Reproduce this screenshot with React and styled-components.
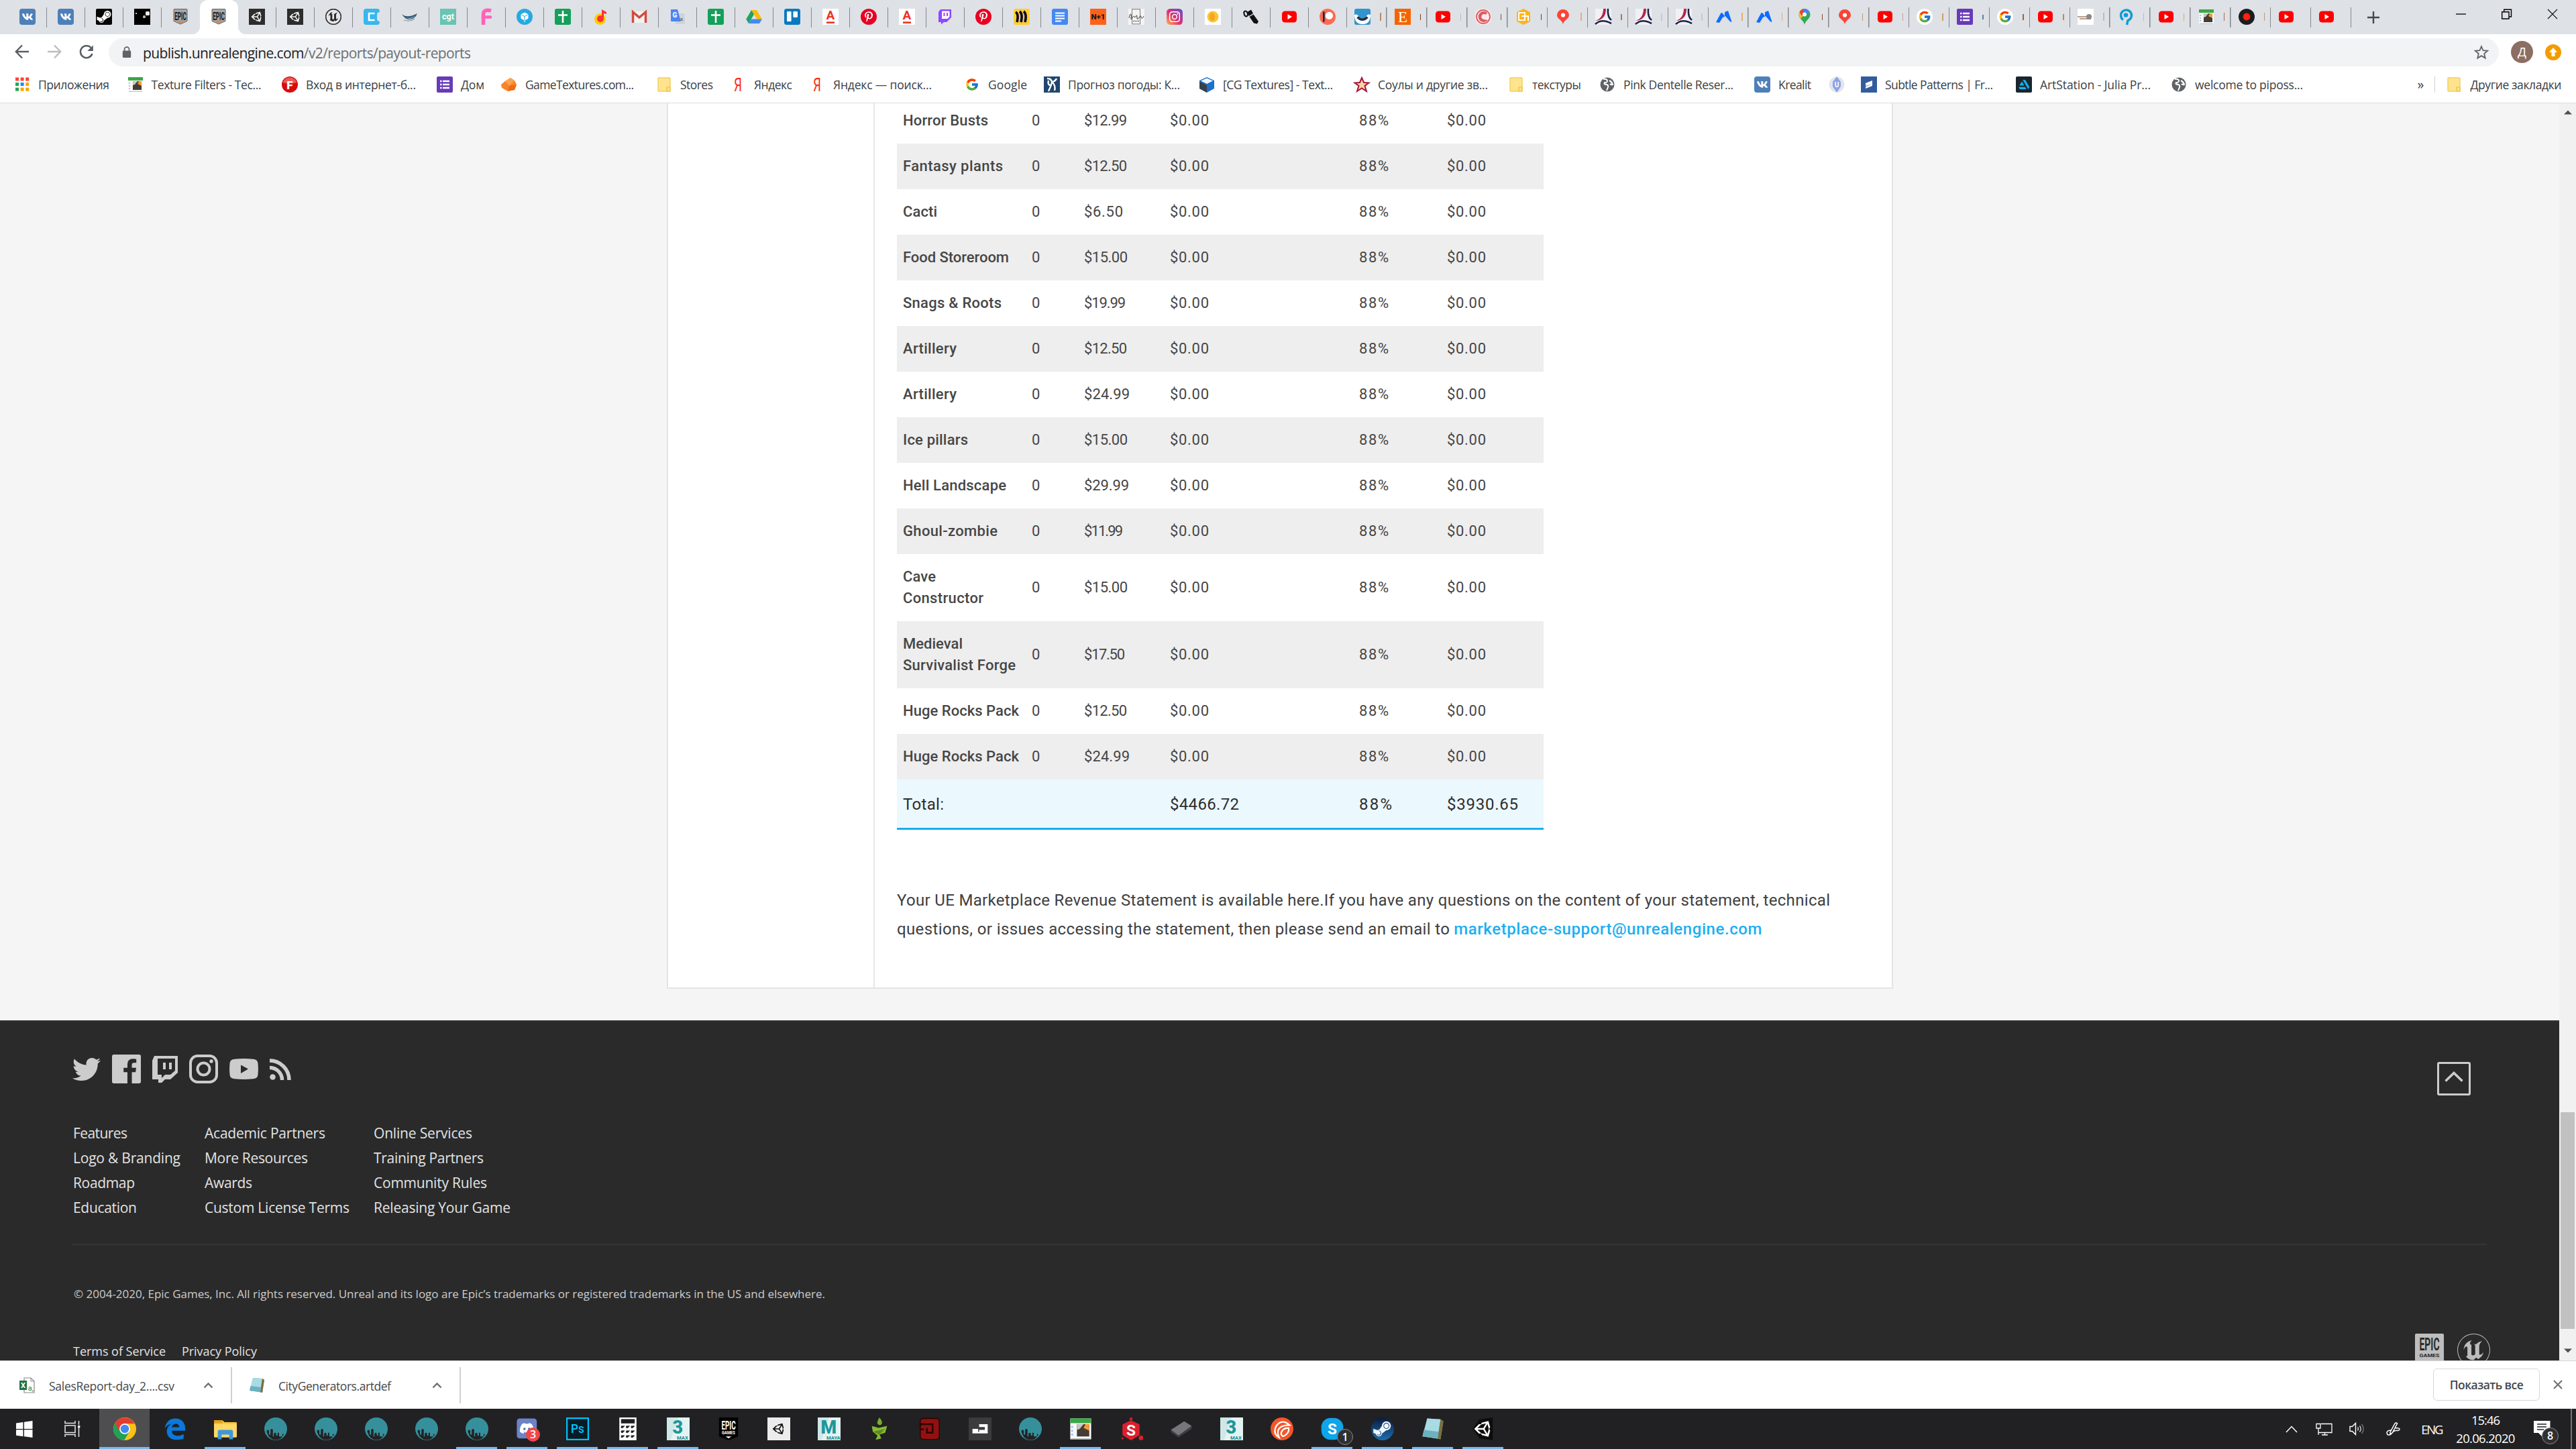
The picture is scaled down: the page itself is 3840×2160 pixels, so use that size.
import React, { useLayoutEffect, useRef, useState } from "react";
import styled, { createGlobalStyle, css } from "styled-components";
import {
  FaVk, FaSteamSymbol, FaPinterestP, FaInstagram, FaTwitter, FaDiscord, FaRss, FaUnity,
} from "react-icons/fa";
import { FcGoogle } from "react-icons/fc";
import { SiUnrealengine, SiArtstation } from "react-icons/si";

const UI = `"Open Sans", "Noto Sans", sans-serif`;
const BODY = `Roboto, "Liberation Sans", sans-serif`;

const Global = createGlobalStyle`
  * { box-sizing: border-box; }
  html, body { margin: 0; padding: 0; overflow: hidden; background: #fff; }
  svg { display: block; flex: none; overflow: visible; }
`;

const Line = styled.span`
  display: inline-block;
  white-space: pre;
`;

function Fit({ w, children, as }) {
  const ref = useRef(null);
  const [gap, setGap] = useState(0);
  useLayoutEffect(() => {
    const el = ref.current;
    const range = document.createRange();
    range.selectNodeContents(el);
    el.style.letterSpacing = "0px";
    const natural = range.getBoundingClientRect().width;
    const n = el.textContent.length;
    if (n > 1) {
      const g = (w - natural) / (n - 1);
      setGap(g);
      el.style.letterSpacing = g + "px";
    }
  }, [w]);
  return <Line as={as} ref={ref} style={{ letterSpacing: gap }}>{children}</Line>;
}

/* ---------- icon artwork, all on a 24 unit grid ---------- */

const T = ({ x = 12, y = 17, s = 14, f = "#fff", b = 700, c, ff = "Roboto", sp }) => (
  <text x={x} y={y} fontSize={s} fill={f} fontWeight={b} textAnchor="middle" fontFamily={`${ff}, sans-serif`} textLength={sp} lengthAdjust="spacingAndGlyphs">{c}</text>
);

const maxTile = (letter, sub) => (
  <>
    <rect width="24" height="24" fill="#e4f3f2" />
    <path d="M0 0H12L4 24H0Z" fill="#cfe8e7" />
    <T x={11.5} y={17} s={19} f="#1c979c" b={900} c={letter} />
    <T x={16.5} y={23} s={5.4} f="#148d92" c={sub} />
  </>
);

const art = {
  vk: <><rect width="24" height="24" rx="4" fill="#4f7fb8" /><FaVk x="3.5" y="3.5" size="17" color="#fff" /></>,
  steam: <><rect width="24" height="24" rx="2" fill="#050506" /><FaSteamSymbol x="0" y="0" size="24" color="#fff" /></>,
  black: <><rect width="24" height="24" fill="#000" /><rect x="2" y="6" width="2" height="2" fill="#ccc" /><rect x="17" y="4" width="6" height="6" rx="1.5" fill="#eee" /><rect x="13" y="10" width="4" height="4" rx="1.5" fill="#bbb" /></>,
  epic: <><path d="M2 1.5Q2 .5 3 .5H21Q22 .5 22 1.5V18.5L12 23 2 18.5Z" fill="#a5a5a5" stroke="#666" /><T y={16.5} s={16} f="#1b1b1b" c="EPIC" sp={17.5} /><path d="M6.5 18.5H17.5L12 21.8Z" fill="#f37c2c" /></>,
  unity: <><rect width="24" height="24" fill="#2d2d2d" /><FaUnity x="3" y="3" size="18" color="#f4f4f4" /></>,
  ue: <><circle cx="12" cy="12" r="11.2" fill="#e6e7ea" stroke="#333" strokeWidth="1.4" /><SiUnrealengine x="0" y="0" size="24" color="#2b2b2b" /></>,
  cyan: <><rect width="24" height="24" rx="4" fill="#36b7ee" /><path d="M24.5 4 20 7V17L24.5 20Z" fill="#dee1e6" /><path d="M16.500 7H8V17H16.500" fill="none" stroke="#fff" strokeWidth="2.600" /></>,
  bird: <><path d="M0 8Q8 15 23 7Q20 16 10 16Q4 15 0 8Z" fill="#3a5874" /><path d="M3 12Q12 17 20 10Q17 15 10 15Z" fill="#7cc9ee" /><path d="M3 17Q12 20 19 15" stroke="#999" strokeWidth="1.3" fill="none" /></>,
  cgt: <><rect width="24" height="24" fill="#69c4b1" /><T y={15.5} s={12} c="cgt" sp={18} /></>,
  pinkf: <><path d="M19 3Q8 0 7.500 8V24" fill="none" stroke="#ff63b8" strokeWidth="5.5" /><path d="M7 12.500H18" stroke="#ff63b8" strokeWidth="4.6" strokeLinecap="round" /></>,
  bluebox: <><circle cx="12" cy="12" r="12" fill="#27a9e1" /><path d="M12 6 17 8.5V14.5L12 17 7 14.5V8.5Z M12 11V20" fill="#fff" stroke="#fff" /><path d="M7.5 9 12 11.5 16.5 9M12 11.5V17" stroke="#27a9e1" fill="none" /></>,
  sheets: <><rect width="24" height="24" rx="3" fill="#14a05a" /><path d="M5 9.5H19M12 3V21" stroke="#fff" strokeWidth="2.6" /></>,
  ymusic: <><circle cx="10.5" cy="15.5" r="8.5" fill="#fc0" /><circle cx="11" cy="15" r="5" fill="#f33" /><path d="M13 1 20 5V8L16 7V15H13Z" fill="#f33" /></>,
  gmail: <><rect x="1" y="4" width="22" height="17" fill="#f2f2f2" /><path d="M2.5 21V5L12 13 21.5 5V21" fill="none" stroke="#d54a3c" strokeWidth="3.4" /></>,
  translate: <><rect x="9" y="7" width="14" height="16" rx="1" fill="#cfd3da" /><path d="M2 1H12L17 19H3Q2 19 2 18Z" fill="#4a86f0" /><T x={8} y={13} s={10} c="G" /><T x={18} y={18} s={8} f="#65717e" c="x" /></>,
  drive: <><path d="M8.2 2H15.8L24 15.5H16.2Z" fill="#fbbc04" /><path d="M8.2 2 12 8.6 4 22 .2 15.5Z" fill="#1fa463" /><path d="M8 15.5H24L20 22H4Z" fill="#4688f4" /></>,
  trello: <><rect width="24" height="24" rx="3.5" fill="#0a7ac0" /><rect x="4" y="4" width="6.6" height="15" rx="1.2" fill="#fff" /><rect x="13.4" y="4" width="6.6" height="9" rx="1.2" fill="#fff" /></>,
  alfa: <><rect width="24" height="24" fill="#fff" /><T y={16} s={19} f="#ef3124" c="A" /><rect x="6" y="19.3" width="12" height="2.6" fill="#ef3124" /></>,
  pin: <><circle cx="12" cy="12" r="12" fill="#e60023" /><FaPinterestP x="4" y="4" size="16" color="#fff" /></>,
  twitch: <><path d="M5 1H21V13L14 20H10L6 23.5V20H2V5Z" fill="#9147ff" /><path d="M7 3.5H18.5V12L15.5 15H7Z" fill="#fff" /><path d="M10.5 6V11M15 6V11" stroke="#9147ff" strokeWidth="2" /></>,
  miro: <><rect width="24" height="24" rx="3" fill="#ffd02f" /><path d="M3 5Q8 8 5 20M9 4Q14 8 11 20M15 4Q20 8 17 20" stroke="#050038" strokeWidth="3.6" fill="none" /></>,
  docs: <><rect width="24" height="24" rx="3" fill="#4688f1" /><path d="M5 6.5H19M5 10.5H19M5 14.5H19M5 18.5H14" stroke="#fff" strokeWidth="2" /></>,
  n1: <><rect width="24" height="24" fill="#ff611a" /><T y={16} s={10.5} f="#1a1a1a" b={900} c="N+1" sp={21} /></>,
  sketch: <><rect width="24" height="24" fill="#f4f4f4" /><rect x="5.5" y=".8" width="12" height="22" fill="none" stroke="#777" /><path d="M1 14C3 4 5 8 4 14S8 8 9 12S13 5 13 13S18 7 19 12S22 13 23 11" stroke="#333" fill="none" strokeWidth="1" /><path d="M7 18.500H16" stroke="#555" strokeWidth="1.400" strokeDasharray="1.500 1" /></>,
  insta: <><defs><linearGradient id="ig" x1="0" y1="1" x2="1" y2="0"><stop offset="0" stopColor="#fdb94b" /><stop offset=".45" stopColor="#e1306c" /><stop offset="1" stopColor="#5b51d8" /></linearGradient></defs><rect width="24" height="24" rx="5.5" fill="url(#ig)" /><FaInstagram x="2.8" y="2.8" size="18.4" color="#fff" /></>,
  coin: <><rect width="24" height="24" fill="#fff" /><circle cx="12" cy="12" r="8.5" fill="#fbc531" /><ellipse cx="11" cy="12" rx="4" ry="6" fill="#f5a623" /></>,
  pen: <><ellipse cx="4" cy="7.500" rx="2.600" ry="4" fill="none" stroke="#111" strokeWidth="2" transform="rotate(-20 4 7)" /><path d="M6 5 12 1.500 15 7 9 11ZM9.500 12 15.500 8.500 23 19 21 22.500 16 21.500Z" fill="#111" /></>,
  yt: <><rect x="1" y="3.5" width="22" height="17" rx="4.6" fill="#f00" /><path d="M9.5 8 16 12 9.5 16Z" fill="#fff" /></>,
  patreon: <><circle cx="12" cy="12" r="12" fill="#ff6a52" /><rect x="5" y="4.5" width="2.6" height="15" fill="#052d49" /><circle cx="14.4" cy="10.4" r="5.6" fill="#fff" /></>,
  smile: <><rect width="24" height="24" rx="3" fill="#3294ce" /><path d="M0 9Q5 7 7 13Q12 17 17 13Q19 7 24 9Q24 23 12 23Q0 23 0 9Z" fill="#fff" /><path d="M4.500 12.5Q12 20 19.500 12.5" stroke="#1e3148" strokeWidth="3.6" fill="none" /></>,
  etsy: <><rect width="24" height="24" fill="#f56400" /><T y={20} s={23} ff="Liberation Serif" b={400} c="E" /></>,
  swirl: <><rect width="24" height="24" rx="9" fill="#fbeaea" /><circle cx="12" cy="12" r="10" fill="none" stroke="#dd5c63" strokeWidth="1.8" /><path d="M18 6A8 8 0 1 0 19 17L13 16A4 4 0 1 1 16 9Z" fill="#dd5c63" /></>,
  amber: <><path d="M12 0 22 5V19L12 24 2 19V5Z" fill="#fbb51c" /><rect x="5" y="6" width="9" height="11" fill="none" stroke="#fff" strokeWidth="1.8" /><path d="M9 11H19V18M14 12V18" stroke="#fff" strokeWidth="2" fill="none" /></>,
  mappin: <><path d="M12 24C12 17 3 16 3 9.5A9 8.5 0 0 1 21 9.5C21 16 12 17 12 24Z" fill="#fc4335" /><circle cx="12" cy="9.5" r="3.1" fill="#fff" /></>,
  swoosh: <><rect width="24" height="24" fill="#f1f1f4" /><path d="M12 0Q12 14 0 18Q16 17 16 0Z" fill="#b5254b" /><path d="M19 0Q18 13 24 17M0 23Q10 14 24 22" stroke="#182347" strokeWidth="2.600" fill="none" /></>,
  zig: <path d="M0 20 7 7Q8 5 10 7L13 11V5L18 3L23 18Q24 22 20 18L14 11 10 13 5 21Z" fill="#0f6bff" />,
  gmaps: <><path d="M12 24C11 17 3.5 16 3.5 8.5A8.5 8.5 0 0 1 20.5 8.5C20.5 16 13 17 12 24Z" fill="#34a853" /><path d="M4 11A8.5 8.5 0 0 1 6 2.5L12 8.5 6 15Z" fill="#fb2" /><path d="M4.500 5A8.5 8.5 0 0 1 13 .2L8 11Z" fill="#ea4335" /><path d="M9 .8A8.5 8.5 0 0 1 20 6L12 8Z" fill="#4285f4" /><circle cx="12" cy="8.5" r="3" fill="#fff" /></>,
  g: <><circle cx="12" cy="12" r="12" fill="#fff" /><FcGoogle x="2" y="2" size="20" /></>,
  gplain: <FcGoogle x="1.5" y="1.5" size="21" />,
  forms: <><rect width="24" height="24" rx="2" fill="#673ab7" /><path d="M5 7H7.5M9 7H19M5 12H7.5M9 12H19M5 17H7.5M9 17H19" stroke="#fff" strokeWidth="2.4" /></>,
  photo: <><rect width="24" height="24" fill="#fff" /><path d="M0 12H14M3 15H20" stroke="#b99f8c" strokeWidth="2" /><circle cx="17" cy="12" r="4" fill="#8a8784" /></>,
  bluepin: <><path d="M8 16.500A8 8 0 1 1 15 17.500L13.500 24" fill="none" stroke="#0f9bd8" strokeWidth="3.400" /><circle cx="12" cy="9.500" r="3.3" fill="#0f9bd8" /></>,
  filters: <><rect x="1" y="1" width="22" height="22" fill="#f8f8f8" /><rect x="1" y="1" width="22" height="5" fill="#3aa845" /><rect x="8" y="7" width="13" height="13" fill="#463c36" /><path d="M8 7H15L11 12 8 13Z" fill="#c9c4bd" /><path d="M17 7H21V14L15 11Z" fill="#f59a35" /><path d="M3 9V19" stroke="#a9c4f3" strokeWidth="2" strokeDasharray="2 2" /><path d="M2 22.4H22" stroke="#bbb" /></>,
  record: <><circle cx="12" cy="12" r="12" fill="#1d1d1f" /><circle cx="12" cy="12" r="5.4" fill="#ff2010" /></>,
  apps: <>{["#ff4136", "#ff4136", "#ff4136", "#27a45b", "#1a8cff", "#f9a602", "#27a45b", "#f9a602", "#f9a602"].map((c, i) => <rect key={i} x={2 + (i % 3) * 7.6} y={1.5 + Math.floor(i / 3) * 7.6} width="5" height="5" fill={c} />)}</>,
  redf: <><circle cx="12" cy="12" r="12" fill="#d90b0b" /><path d="M1.5 9A11 11 0 0 1 22.5 9Q12 12 1.5 9" fill="#f27a70" opacity=".7" /><T y={18.5} s={17} b={900} c="F" /></>,
  orange: <><path d="M6 7 14 2 20 6 23 12 20 20 10 22 1 17 0 12Z" fill="#f9822b" /><path d="M14 2 20 6 12 14 6 7Z" fill="#fba253" /><path d="M12 14 23 12 20 20 10 22Z" fill="#ef6a14" /></>,
  folder: <><path d="M3 3Q3 2 4 2H20Q21 2 21 3V22H4Q3 22 3 21Z" fill="#ffe38f" stroke="#f3cf5d" strokeWidth="1.4" /><path d="M16 22V16H21V22Z" fill="#ffe38f" stroke="#eabf3d" strokeWidth="1.2" /></>,
  ya: <T y={22} s={28} f="#fc2a14" b={400} c="Я" sp={12} />,
  weather: <><rect width="24" height="24" fill="#20466f" /><path d="M5 3Q12 3 12 9Q18 6 19 3M12 9Q10 16 7 22M13 9Q18 14 16 21M7 6Q5 14 12 13" stroke="#fff" strokeWidth="2.4" fill="none" /></>,
  cgcube: <><path d="M12 1 23 6V18L12 24 1 18V6Z" fill="#1c71c8" /><path d="M12 2.5 21 6.5 12 11 3 6.5Z" fill="#eef6fd" /><path d="M1 7.5 12 13V24L1 18Z" fill="#3a4048" /></>,
  star: <path d="M12 2 15 9 22.5 9.5 16.5 14 19 22 12 17.5 5 22 7.5 14 1.5 9.5 9 9Z" fill="#fbd3a0" stroke="#a3163c" strokeWidth="2" />,
  globe: <><circle cx="12" cy="12" r="10.5" fill="#5f6368" /><path d="M6 4Q12 3 12 7Q11 10 8 9Q6 12 11 12Q14 13 13 16L11 21M15 6Q19 8 20 12Q18 13 16 11" stroke="#fff" strokeWidth="2" fill="none" /></>,
  uglobe: <><circle cx="12" cy="12" r="11.5" fill="#e3e5ea" /><path d="M12 0 18 8V15L12 24 6 15V8Z" fill="#8ba4e8" /><T y={16} s={10} c="U" /></>,
  subtle: <><rect width="24" height="24" fill="#335c9e" /><path d="M7 10 17 6V11L7 14ZM7 15 17 11V14L7 18Z" fill="#fff" /></>,
  artst: <><rect width="24" height="24" rx="2" fill="#1a262e" /><SiArtstation x="4" y="4" size="16" color="#13aff0" /></>,
  chrome: <><circle cx="12" cy="12" r="12" fill="#fbc116" /><path d="M1.6 6A12 12 0 0 0 11.4 24L16.8 14.8 12 12Z" fill="#21a056" /><path d="M1.6 6A12 12 0 0 1 22.4 6.5H12V12H5Z" fill="#e23d30" /><circle cx="12" cy="12" r="5.6" fill="#fff" /><circle cx="12" cy="12" r="4.4" fill="#4587f3" /></>,
  edge: <path d="M1.3 11.5C2 5 6.500 1 12.400 1 19.500 1 22.700 6 22.700 12V14H8.500C8.700 20 16 20.500 21 17.500V22C14.500 25 3.300 24.200 3.300 14.500 3.300 11 5.500 8 8.500 6.500 5 7.200 3 9 1.300 11.500ZM8.600 10.200H16.400C16.400 5.500 9.500 5.500 8.600 10.200Z" fill="#0a78dc" />,
  explorer: <><path d="M0 4Q0 3 1 3H9L11 5H23Q24 5 24 6V20H0Z" fill="#f9c73b" /><path d="M0 7H24V20Q24 21 23 21H1Q0 21 0 20Z" fill="#ffd866" /><path d="M0 3H9V6H0Z" fill="#e3a21a" /><path d="M4 23V15Q4 13 6 13H18Q20 13 20 15V23H16V18H8V23Z" fill="#3b98de" /></>,
  teal: <><circle cx="12" cy="12" r="12" fill="#35909c" /><path d="M2.500 15V14Q4 12 5 14V18H6.500V13Q8 11 9 13V20H10V17Q11.500 15 12.500 17V19H14V16H15.500V20H19V17L20.500 18Q17 24 12 23.700Q5 23.500 2.500 15Z" fill="#232325" /></>,
  discord: <><rect x="1" y="1" width="21" height="21" rx="3" fill="#6d83c6" /><FaDiscord x="3.500" y="3.500" size="16" color="#fff" /></>,
  ps: <><rect x=".8" y=".8" width="22.400" height="22.400" fill="#071c26" stroke="#00c8ff" strokeWidth="1.500" /><T y={16.500} s={13} f="#00c8ff" b={500} c="Ps" sp={14} /></>,
  calc: <><rect x="3" width="18" height="24" fill="#fff" /><path d="M5 2H19V6H5ZM5 9H8.500L6.500 11H5ZM10.300 9H13.800L11.800 11H10.300ZM15.500 9H19L17 11H15.500ZM5 14H8.500L6.500 16H5ZM10.300 14H13.800L11.800 16H10.300ZM15.500 14H19L17 16H15.500ZM5 19H8.500L6.500 21H5ZM10.300 19H13.800L11.800 21H10.300ZM15.500 19H19L17 21H15.500Z" fill="#1f1f21" stroke="#1f1f21" strokeWidth=".5" /></>,
  max: maxTile("3", "MAX"),
  maya: maxTile("M", "MAYA"),
  epicdark: <><path d="M2 0H22V20L12 24 2 20Z" fill="#000" /><T y={12.500} s={13.500} c="EPIC" sp={15} /><T y={17.500} s={4.500} c="GAMES" sp={14} /><path d="M9 20H15L12 22Z" fill="#fff" /></>,
  unitywhite: <><rect width="24" height="24" fill="#ececec" /><FaUnity x="5" y="5" size="14" color="#111" /></>,
  sprout: <><path d="M12 0Q17 6 13 8Q7 8 12 0Z" fill="#79ad2c" /><path d="M4 9 11 11 20 9 18 16 12 18 14 22 8 23.500 10 19 5 15Z" fill="#86bb33" /><path d="M5 15 18 12 12 18Z" fill="#5c8a1d" /></>,
  redd: <><rect x="2" y="1" width="20" height="22" rx="3" fill="#931111" stroke="#250303" /><path d="M2 9.500V7H15V16H9V11M2 12.500H6" fill="none" stroke="#2b0505" strokeWidth="1.800" /></>,
  gray: <><rect width="24" height="24" fill="#3b3b3d" /><path d="M4 12H10V16H4ZM11 7H20V16H11V13H17V10H11Z" fill="#fff" /><path d="M4 16H20" stroke="#fff" strokeWidth="1.500" /></>,
  substance: <><path d="M12 4 20 8V18L12 23 4 18V8Z" fill="#dd1f2d" stroke="#dd1f2d" strokeWidth="2" strokeLinejoin="round" /><circle cx="12" cy="1.500" r="1.500" fill="#dd1f2d" /><circle cx="22.500" cy="21.500" r="2.400" fill="#dd1f2d" /><circle cx="3" cy="22" r="1" fill="#dd1f2d" /><T y={19} s={16} c="S" /></>,
  slab: <><path d="M1 13 15 4 23 9 9 19Z" fill="#77777b" /><path d="M1 13 9 19V21L1 15.500ZM9 19 23 9V12L9 21Z" fill="#3f3f42" /></>,
  coral: <><circle cx="12" cy="12" r="12" fill="#f4562a" /><path d="M20 8Q12 1 6 9Q2 17 9 21Q5 12 13 9Q17 8 20 8ZM19 11Q12 11 11 17Q12 21 15 19Q20 16 19 11Z" fill="none" stroke="#fff" strokeWidth="1.600" /></>,
  skype: <><rect x=".5" y=".5" width="23" height="23" rx="9.500" fill="#0fa5e9" /><T y={17.500} s={16} c="S" /></>,
  steamblue: <><defs><linearGradient id="st" x1="0" y1="0" x2="0" y2="1"><stop offset="0" stopColor="#0c1a3c" /><stop offset="1" stopColor="#1d6fb0" /></linearGradient></defs><circle cx="12" cy="12" r="12" fill="url(#st)" /><FaSteamSymbol x="1" y="1.500" size="21" color="#f2f7fb" /></>,
  notepad: <><path d="M6 1 20 2 23 4 20 23 2 20Z" fill="#6fb1bd" /><path d="M6 1 20 2 17 22 1 20Z" fill="#a9dbe4" /><path d="M20 2 23 4 20 23 17 22Z" fill="#7b6f3e" /><path d="M2.500 13 18 15 17 22 1 20Z" fill="#6db0c0" /></>,
  unityplain: <><path d="M1 12 8 2 22 0V24L8 22Z" fill="#0d0d0d" /><FaUnity x="2" y="2" size="20" color="#fff" /></>,
  excel: <><path d="M7 1H17L22 6V23H7Z" fill="#fff" stroke="#8a8a8a" strokeWidth="1.200" /><path d="M17 1V6H22" fill="none" stroke="#8a8a8a" /><rect x="0" y="5" width="11" height="14" fill="#1c7246" /><T x={5.500} y={16} s={11} c="X" /><T x={17} y={20} s={11} f="#3e9c6b" b={500} c="a," /></>,
};

const Icon = ({ name, size = 24 }) => (
  <svg width={size} height={size} viewBox="0 0 24 24">{art[name]}</svg>
);

/* ---------- window frame ---------- */

const Desktop = styled.div`
  width: 3840px;
  height: 2160px;
  display: flex;
  flex-direction: column;
  overflow: hidden;
  font-family: ${UI};
`;

const TabStrip = styled.div`
  height: 51px;
  flex: none;
  display: flex;
  background: #dee1e6;
  padding-left: 13px;
`;

const Tab = styled.div`
  flex: none;
  display: flex;
  width: ${(p) => (p.$wide ? 59.9 : 57)}px;
  height: 51px;
  padding: 13px 0 0 ${(p) => (p.$wide ? 11 : 16)}px;
  background:
    linear-gradient(${(p) => (p.$line ? "#85888c" : "transparent")}, ${(p) => (p.$line ? "#85888c" : "transparent")})
    right 0 top 11px / 1.5px 30px no-repeat;
  ${(p) => p.$active && css`
    position: relative;
    background: #fff;
    border-radius: 12px 12px 0 0;
    &::before, &::after {
      content: "";
      position: absolute;
      bottom: 0;
      width: 12px;
      height: 12px;
    }
    &::before { left: -12px; background: radial-gradient(circle at 0 0, transparent 12px, #fff 12.5px); }
    &::after { right: -12px; background: radial-gradient(circle at 100% 0, transparent 12px, #fff 12.5px); }
  `}
`;

const TitleSliver = styled.span`
  width: 1.5px;
  height: ${(p) => p.$h}px;
  margin: ${(p) => (24 - p.$h) / 2}px 0 0 14px;
  background: ${(p) => p.$c};
`;

const NewTab = styled.div`
  margin: 16px 0 0 23px;
  width: 20px;
`;

const WindowButtons = styled.div`
  margin-left: auto;
  padding: 13px 27px 0 0;
  display: flex;
  gap: 52px;
`;

const Toolbar = styled.div`
  height: 56px;
  flex: none;
  display: flex;
  align-items: flex-start;
  padding: 6px 14px 0 21px;
  background: #fff;
`;

const NavButtons = styled.div`
  display: flex;
  gap: 24px;
  padding-top: 8px;
  width: 141px;
`;

const Omnibox = styled.div`
  width: 3563px;
  height: 42px;
  border-radius: 21px;
  background: #f1f3f4;
  display: flex;
  align-items: center;
  padding: 0 15px 0 20px;
  font-size: 21px;
  color: #202124;
`;

const UrlText = styled.div`
  margin: 1px auto 0 17px;
`;

const UrlPath = styled.span`
  color: #6b6f73;
`;

const Avatar = styled.div`
  width: 33px;
  height: 33px;
  margin: 4px 18px 0 18px;
  border-radius: 50%;
  background: #8d6e63;
  color: #fff;
  font-size: 19px;
  line-height: 32px;
  text-align: center;
`;

const UpdateDot = styled.div`
  margin-top: 9px;
`;

const Bookmarks = styled.div`
  height: 47px;
  flex: none;
  display: flex;
  align-items: center;
  background: #fff;
  border-bottom: 1px solid #dadce0;
  padding: 0 0 9px 21px;
  font-size: 17.5px;
  color: #3c4043;
`;

const Bookmark = styled.div`
  flex: none;
  display: flex;
  align-items: center;
  gap: 12px;
  height: 24px;
  width: ${(p) => p.$w}px;
`;

const MoreMark = styled.div`
  margin-left: auto;
  width: 26px;
  font-size: 20px;
  line-height: 20px;
`;

const OtherFolder = styled.div`
  display: flex;
  align-items: center;
  gap: 12px;
  height: 24px;
  padding-left: 16px;
  margin-right: 22px;
  border-left: 1px solid #cfd1d4;
`;

/* ---------- page ---------- */

const Viewport = styled.div`
  height: 1874px;
  flex: none;
  display: flex;
`;

const Page = styled.div`
  width: 3815px;
  overflow: hidden;
  background: #f5f5f5;
  display: flex;
  flex-direction: column;
`;

const Stage = styled.main`
  height: 1367px;
  flex: none;
`;

const Card = styled.section`
  margin-left: 994px;
  width: 1828px;
  height: 1320px;
  display: flex;
  background: #fff;
  border: solid #e4e4e4;
  border-width: 0 2px 2px 2px;
  font-family: ${BODY};
`;

const SideNav = styled.aside`
  width: 308px;
  border-right: 2px solid #e6e6e6;
`;

const Report = styled.div`
  flex: 1;
  padding-left: 33px;
  overflow: hidden;
`;

const Table = styled.div`
  width: 964px;
  margin-top: -8px;
`;

const Row = styled.div`
  display: grid;
  grid-template-columns: 192px 78px 128px 282px 131px 1fr;
  align-items: center;
  height: ${(p) => (p.$tall ? 100 : 68)}px;
  padding-left: 9px;
  font-size: 22px;
  font-weight: 450;
  line-height: 32px;
  color: #464646;
  background: ${(p) => (p.$shade ? "#eeeeee" : "#fff")};
`;

const Name = styled.div`
  display: flex;
  flex-direction: column;
  align-items: flex-start;
  font-weight: 500;
`;

const TotalRow = styled(Row)`
  height: 75px;
  padding-top: 2px;
  font-size: 24px;
  font-weight: 450;
  color: #2e2e2e;
  background: #ebf8fe;
  border-bottom: 3px solid #14b1f0;
`;

const Note = styled.p`
  margin: 84px 0 0;
  font-size: 24px;
  line-height: 43px;
  color: #404040;
`;

const MailLink = styled.a`
  color: #1caff2;
  font-weight: 500;
`;

const Footer = styled.footer`
  flex: none;
  height: 560px;
  background: #2a2a2a;
  border-top: 2px solid #333;
  padding: 49px 108px 0;
  color: #e3e3e3;
`;

const FooterTop = styled.div`
  display: flex;
  justify-content: space-between;
  height: 43px;
`;

const Social = styled.div`
  display: flex;
  align-items: center;
  color: #ccc;
  height: 43px;
  gap: 17px;
`;

const ToTop = styled.div`
  margin: 11px 24px 0 0;
  width: 50px;
  height: 50px;
  border: 3px solid #ccc;
  border-radius: 3px;
  display: flex;
  justify-content: center;
  padding-top: 10px;
`;

const Links = styled.div`
  display: grid;
  grid-template-columns: 196px 252px 260px;
  grid-auto-rows: 37px;
  margin-top: 56px;
  padding-left: 1px;
  font-size: 21px;
  line-height: 37px;
`;

const Rule = styled.div`
  height: 2px;
  margin-top: 35px;
  background: #363636;
`;

const Copyright = styled.div`
  margin: 58px 0 44px 2px;
  font-size: 17px;
  line-height: 30px;
  color: #ccc;
`;

const Legal = styled.div`
  display: flex;
  justify-content: space-between;
`;

const LegalLinks = styled.div`
  display: flex;
  gap: 24px;
  padding-left: 1px;
  font-size: 18px;
  line-height: 52px;
`;

const Logos = styled.div`
  display: flex;
  gap: 20px;
  margin-right: -5px;
`;

const ScrollTrack = styled.div`
  width: 25px;
  background: #f1f1f1;
  display: flex;
  flex-direction: column;
  align-items: center;
  justify-content: space-between;
  padding: 10px 0 11px;
`;

const ScrollThumb = styled.div`
  width: 21px;
  height: 323px;
  background: #c1c1c1;
  margin: auto 0 29px;
`;

/* ---------- downloads ---------- */

const Downloads = styled.div`
  height: 72px;
  flex: none;
  display: flex;
  background: #fff;
  border-top: 1px solid #d5d7da;
  font-size: 17.5px;
  color: #45484b;
`;

const DownloadItem = styled.div`
  display: flex;
  align-items: center;
  width: ${(p) => p.$w}px;
  height: 54px;
  margin-top: 9px;
  padding: 0 26px 0 ${(p) => p.$pad}px;
  border-right: 2px solid #d0d0d0;
`;

const FileName = styled.div`
  margin: 2px auto 0 20px;
`;

const ShowAll = styled.div`
  margin: 11px 20px 0 auto;
  width: 159px;
  height: 48px;
  border: 1px solid #d5d7da;
  border-radius: 6px;
  display: flex;
  align-items: center;
  justify-content: center;
  font-weight: 600;
`;

const CloseBar = styled.div`
  margin: 28px 20px 0 0;
`;

/* ---------- taskbar ---------- */

const Taskbar = styled.div`
  height: 60px;
  flex: none;
  display: flex;
  background: #212123;
  color: #fff;
`;

const TaskStart = styled.div`
  width: 148px;
  display: flex;
  align-items: center;
  padding-left: 24px;
  gap: 47px;
`;

const TaskButton = styled.div`
  flex: none;
  width: 75px;
  display: flex;
  align-items: center;
  justify-content: center;
  position: relative;
  background: ${(p) => (p.$on ? "#4e4e50" : "transparent")};
  ${(p) => p.$run && css`
    &::after {
      content: "";
      position: absolute;
      left: ${p.$on ? 0 : 7}px;
      right: ${p.$on ? 0 : 7}px;
      bottom: 0;
      height: 3px;
      background: #76b9ed;
    }
  `}
`;

const Badge = styled.span`
  position: absolute;
  right: ${(p) => p.$r}px;
  bottom: ${(p) => p.$b}px;
  width: ${(p) => p.$s}px;
  height: ${(p) => p.$s}px;
  border-radius: 50%;
  font: 600 16px/${(p) => p.$s - 2}px ${UI};
  text-align: center;
  background: ${(p) => (p.$red ? "#f04747" : "#303032")};
  border: 1px solid ${(p) => (p.$red ? "#f04747" : "#8a8a8a")};
`;

const Tray = styled.div`
  margin-left: auto;
  display: flex;
  align-items: center;
  font-size: 18.5px;
`;

const TrayIcon = styled.div`
  margin-right: ${(p) => p.$mr}px;
`;

const Clock = styled.div`
  width: 88px;
  margin: 0 28px 0 21px;
  line-height: 27px;
  text-align: center;
`;

const Notice = styled.div`
  position: relative;
  width: 25px;
  height: 26px;
  margin-right: 30px;
`;

const ShowDesktop = styled.div`
  width: 8px;
  height: 60px;
  border-left: 2px solid #757577;
`;

const narrow = ["vk", "vk", "steam", "black", "epic", "epic", "unity", "unity", "ue", "cyan", "bird", "cgt", "pinkf", "bluebox", "sheets", "ymusic", "gmail", "translate", "sheets", "drive", "trello", "alfa", "pin", "alfa", "twitch", "pin", "miro", "docs", "n1", "sketch", "insta", "coin", "pen", "yt", "patreon"];
const wide = [
  ["smile", 12, "#b98a6a"], ["etsy", 9, "#6a4420"], ["yt", 11, "#b9bcc4"], ["swirl", 9, "#7a5433"],
  ["amber", 9, "#6a4420"], ["mappin", 12, "#e0b070"], ["swoosh", 9, "#b07a3c"], ["swoosh", 11, "#c3c9d6"],
  ["swoosh", 11, "#c3c9d6"], ["zig", 12, "#e0b070"], ["zig", 12, "#e0b070"], ["gmaps", 9, "#8a4a30"],
  ["mappin", 11, "#b9a06a"], ["yt", 11, "#b9a5a0"], ["g", 11, "#d0a060"], ["forms", 7, "#5f82a0"],
  ["g", 9, "#a5622c"], ["yt", 9, "#c08a4c"], ["photo", 12, "#b9bcc4"], ["bluepin", 12, "#b9bcc4"],
  ["yt", 11, "#e0a860"], ["filters", 12, "#b0663c"], ["record", 12, "#c09a6a"], ["yt"], ["yt"],
];

const marks = [
  ["apps", "Приложения", 106, 168.5],
  ["filters", "Texture Filters - Tec...", 164, 230.5],
  ["redf", "Вход в интернет-б...", 164, 231],
  ["forms", "Дом", 35, 96],
  ["orange", "GameTextures.com...", 162, 231],
  ["folder", "Stores", 49, 110],
  ["ya", "Яндекс", 57, 118],
  ["ya", "Яндекс — поиск...", 147, 231],
  ["gplain", "Google", 58, 119],
  ["weather", "Прогноз погоды: К...", 167, 231],
  ["cgcube", "[CG Textures] - Text...", 164, 231],
  ["star", "Соулы и другие зв...", 164, 230],
  ["folder", "текстуры", 73, 136],
  ["globe", "Pink Dentelle Reser...", 164, 231],
  ["vk", "Krealit", 49, 111],
  ["uglobe", "", 0, 48],
  ["subtle", "Subtle Patterns | Fr...", 161, 231],
  ["artst", "ArtStation - Julia Pr...", 165, 231],
  ["globe", "welcome to piposs...", 161, 231],
];

const rows = [
  [["Horror Busts", 127], "$12.99", 64],
  [["Fantasy plants", 149], "$12.50", 64],
  [["Cacti", 51], "$6.50", 58],
  [["Food Storeroom", 158], "$15.00", 65],
  [["Snags & Roots", 147], "$19.99", 62],
  [["Artillery", 80], "$12.50", 64],
  [["Artillery", 80], "$24.99", 68],
  [["Ice pillars", 97], "$15.00", 65],
  [["Hell Landscape", 154], "$29.99", 67],
  [["Ghoul-zombie", 141], "$11.99", 58],
  [["Cave", 49, "Constructor", 120], "$15.00", 65],
  [["Medieval", 89, "Survivalist Forge", 168], "$17.50", 61],
  [["Huge Rocks Pack", 173], "$12.50", 64],
  [["Huge Rocks Pack", 173], "$24.99", 68],
];

const links = [
  ["Features", 81], ["Academic Partners", 180], ["Online Services", 147],
  ["Logo & Branding", 160], ["More Resources", 154], ["Training Partners", 164],
  ["Roadmap", 92], ["Awards", 71], ["Community Rules", 169],
  ["Education", 95], ["Custom License Terms", 216], ["Releasing Your Game", 204],
];

const tasks = [
  ["chrome", 1, 1], ["edge"], ["explorer", 1], ["teal"], ["teal"], ["teal"], ["teal"], ["teal", 1],
  ["discord", 1], ["ps", 1], ["calc", 1], ["max", 1], ["epicdark"], ["unitywhite"], ["maya"], ["sprout"],
  ["redd"], ["gray"], ["teal"], ["filters", 1], ["substance"], ["slab"], ["max"], ["coral"],
  ["skype", 1], ["steamblue", 1], ["notepad", 1], ["unityplain", 1],
];

const Caret = () => (
  <svg width="15" height="10" viewBox="0 0 15 10"><path d="M1.500 8.500 7.500 2.500 13.500 8.500" fill="none" stroke="#6a6d70" strokeWidth="2.300" /></svg>
);

function Browser() {
  return (
    <>
      <TabStrip>
        {narrow.map((n, i) => (
          <Tab key={i} $active={i === 5} $line={i !== 4 && i !== 5}><Icon name={n} /></Tab>
        ))}
        {wide.map(([n, h, c], i) => (
          <Tab key={i} $wide $line><Icon name={n} />{h && <TitleSliver $h={h} $c={c} />}</Tab>
        ))}
        <NewTab>
          <svg width="20" height="20" viewBox="0 0 20 20"><path d="M10 1V19M1 10H19" stroke="#45484c" strokeWidth="2.400" /></svg>
        </NewTab>
        <WindowButtons>
          <svg width="16" height="16" viewBox="0 0 16 16"><path d="M0 8H15" stroke="#000" strokeWidth="1.300" /></svg>
          <svg width="16" height="16" viewBox="0 0 16 16"><path d="M.7 4.700H11V15H.7ZM3.700 4.500V1.200H14.500V12H11.500" fill="none" stroke="#000" strokeWidth="1.400" /></svg>
          <svg width="16" height="16" viewBox="0 0 16 16"><path d="M1 1 15 15M15 1 1 15" stroke="#111" strokeWidth="1.200" /></svg>
        </WindowButtons>
      </TabStrip>
      <Toolbar>
        <NavButtons>
          <svg width="24" height="24" viewBox="0 0 24 24"><path d="M22 12H3M12 2.500 2.800 12 12 21.500" fill="none" stroke="#5a5e62" strokeWidth="2.400" /></svg>
          <svg width="24" height="24" viewBox="0 0 24 24"><path d="M2 12H21M12 2.500 21.200 12 12 21.500" fill="none" stroke="#bbbdc0" strokeWidth="2.400" /></svg>
          <svg width="24" height="24" viewBox="0 0 24 24"><path d="M20.500 15A9 9 0 1 1 18.500 6" fill="none" stroke="#5a5e62" strokeWidth="2.500" /><path d="M21.800 2.500V11H13.300Z" fill="#5a5e62" /></svg>
        </NavButtons>
        <Omnibox>
          <svg width="14" height="18" viewBox="0 0 14 18"><rect x=".8" y="6.500" width="12.400" height="10.500" rx="1.500" fill="#5f6368" /><path d="M3.500 8V4.600A3.500 3.500 0 0 1 10.500 4.600V8" fill="none" stroke="#5f6368" strokeWidth="1.700" /></svg>
          <UrlText><Fit w={489}>publish.unrealengine.com<UrlPath>/v2/reports/payout-reports</UrlPath></Fit></UrlText>
          <svg width="22" height="22" viewBox="0 0 24 24"><path d="M12 2.500 14.800 9 22 9.600 16.600 14.300 18.200 21.300 12 17.600 5.800 21.300 7.400 14.300 2 9.600 9.200 9Z" fill="none" stroke="#5f6368" strokeWidth="2" /></svg>
        </Omnibox>
        <Avatar>Д</Avatar>
        <UpdateDot>
          <svg width="24" height="24" viewBox="0 0 24 24"><circle cx="12" cy="12" r="12" fill="#f59b00" /><path d="M12 5 18 12H14.500V18H9.500V12H6Z" fill="#fff" /></svg>
        </UpdateDot>
      </Toolbar>
      <Bookmarks>
        {marks.map(([n, t, w, p], i) => (
          <Bookmark key={i} $w={p}><Icon name={n} />{t && <Fit w={w}>{t}</Fit>}</Bookmark>
        ))}
        <MoreMark>»</MoreMark>
        <OtherFolder><Icon name="folder" /><Fit w={136}>Другие закладки</Fit></OtherFolder>
      </Bookmarks>
    </>
  );
}

function Sales() {
  return (
    <Table>
      {rows.map(([n, price, pw], i) => (
        <Row key={i} $shade={i % 2 === 1} $tall={n.length > 2}>
          <Name>
            <Fit w={n[1]}>{n[0]}</Fit>
            {n[2] && <Fit w={n[3]}>{n[2]}</Fit>}
          </Name>
          <span>0</span>
          <Fit w={pw}>{price}</Fit>
          <Fit w={58}>$0.00</Fit>
          <Fit w={44}>88%</Fit>
          <Fit w={58}>$0.00</Fit>
        </Row>
      ))}
      <TotalRow>
        <Fit w={61}>Total:</Fit>
        <span />
        <span />
        <Fit w={103}>$4466.72</Fit>
        <Fit w={49}>88%</Fit>
        <Fit w={106}>$3930.65</Fit>
      </TotalRow>
    </Table>
  );
}

function SiteFooter() {
  return (
    <Footer>
      <FooterTop>
        <Social>
          <FaTwitter size="42" />
          <svg width="43" height="43" viewBox="0 0 24 24"><path d="M1.500 0H22.500Q24 0 24 1.500V22.500Q24 24 22.500 24H16.500V14.700H19.600L20.100 11H16.500V8.700Q16.500 6.900 18.300 6.900H20.200V3.700Q19 3.500 17.500 3.500 12.800 3.500 12.800 8.300V11H9.600V14.700H12.800V24H1.500Q0 24 0 22.500V1.500Q0 0 1.500 0Z" fill="#ccc" /></svg>
          <svg width="38" height="40" viewBox="0 0 38 40"><path d="M3 0H38V25L27 35H19L14 40H9V35H0V7ZM8 4V28H14V33L19 28H27L34 22V4Z" fill="#ccc" fillRule="evenodd" /><path d="M16 10H20V20H16ZM25 10H29V20H25Z" fill="#ccc" /></svg>
          <svg width="43" height="43" viewBox="0 0 43 43"><rect x="2" y="2" width="39" height="39" rx="10.500" fill="none" stroke="#ccc" strokeWidth="4" /><circle cx="21.500" cy="21.500" r="9" fill="none" stroke="#ccc" strokeWidth="4" /><circle cx="33" cy="10" r="2.700" fill="#ccc" /></svg>
          <svg width="43" height="31" viewBox="0 0 43 31"><path d="M8 .7Q21.500-.7 35 .7Q42 1 42.500 7Q43.400 15.500 42.500 24Q42 30 35 30.300Q21.500 31.700 8 30.300Q1 30 .5 24Q-.4 15.500 .5 7Q1 1 8 .7ZM17 9.500V22L28 15.500Z" fill="#ccc" /></svg>
          <svg width="32" height="32" viewBox="0 0 32 32"><circle cx="4.500" cy="27.500" r="4.300" fill="#ccc" /><path d="M0 13.500A18.500 18.500 0 0 1 18.500 32M0 3A29 29 0 0 1 29 32" fill="none" stroke="#ccc" strokeWidth="5.500" /></svg>
        </Social>
        <ToTop>
          <svg width="28" height="18" viewBox="0 0 28 18"><path d="M1.500 15.500 14 3.500 26.500 15.500" fill="none" stroke="#ccc" strokeWidth="3.500" /></svg>
        </ToTop>
      </FooterTop>
      <Links>{links.map(([t, w]) => <div key={t}><Fit w={w}>{t}</Fit></div>)}</Links>
      <Rule />
      <Copyright><Fit w={1120}>© 2004-2020, Epic Games, Inc. All rights reserved. Unreal and its logo are Epic’s trademarks or registered trademarks in the US and elsewhere.</Fit></Copyright>
      <Legal>
        <LegalLinks><Fit w={138}>Terms of Service</Fit><Fit w={112}>Privacy Policy</Fit></LegalLinks>
        <Logos>
          <svg width="43" height="50" viewBox="0 0 43 50"><path d="M2 0H41Q43 0 43 2V41L21.500 50 0 41V2Q0 0 2 0Z" fill="#bdbdbd" /><T x={21.500} y={24.500} s={26} f="#2a2a2a" c="EPIC" sp={30} /><T x={21.500} y={35} s={8} f="#2a2a2a" c="GAMES" sp={30} /></svg>
          <SiUnrealengine size="49" color="#bdbdbd" />
        </Logos>
      </Legal>
    </Footer>
  );
}

function SystemBar() {
  return (
    <Taskbar>
      <TaskStart>
        <svg width="25" height="25" viewBox="0 0 25 25"><path d="M0 3.600 10.500 2V12H0ZM12 1.800 24.500 0V12H12ZM0 13.200H10.500V23.300L0 21.700ZM12 13.200H24.500V25L12 23.300Z" fill="#fff" /></svg>
        <svg width="24" height="24" viewBox="0 0 24 24"><path d="M1 7H16V17.500H1ZM1 0V3.500H16V0M1 24V20.500H16V24M21.500 0V6M21.500 10V24" fill="none" stroke="#e8e8e8" strokeWidth="1.500" /><rect x="20" y="7" width="3.300" height="3.300" fill="#fff" /></svg>
      </TaskStart>
      {tasks.map(([n, run, on], i) => (
        <TaskButton key={i} $run={run} $on={on}>
          <Icon name={n} size={34} />
          {n === "discord" && <Badge $red $s={21} $r={18} $b={11}>3</Badge>}
          {n === "skype" && <Badge $s={24} $r={6} $b={6}>1</Badge>}
        </TaskButton>
      ))}
      <Tray>
        <TrayIcon $mr={27}><svg width="18" height="11" viewBox="0 0 18 11"><path d="M1 10 9 1.500 17 10" fill="none" stroke="#fff" strokeWidth="1.500" /></svg></TrayIcon>
        <TrayIcon $mr={25}><svg width="25" height="19" viewBox="0 0 25 19"><path d="M8 1.500H24V14.500H4V8M1 1.500H7V8H1ZM4 8V18M9 18H18M13.500 15V18" fill="none" stroke="#fff" strokeWidth="1.300" /></svg></TrayIcon>
        <TrayIcon $mr={32}><svg width="23" height="20" viewBox="0 0 23 20"><path d="M1 6.500H4.500L9.500 1.500V18.500L4.500 13.500H1Z" fill="none" stroke="#fff" strokeWidth="1.400" /><path d="M12.500 7.500Q14.500 10 12.500 12.500M15.500 5.500Q19 10 15.500 14.500" fill="none" stroke="#ddd" strokeWidth="1.300" /><path d="M18.500 3Q24 10 18.500 17" fill="none" stroke="#777" strokeWidth="1.300" /></svg></TrayIcon>
        <TrayIcon $mr={31}><svg width="21" height="21" viewBox="0 0 21 21"><path d="M6 15 13 2Q15 0 16.500 2L9.500 15.500 6 18ZM8 12Q1 12 1 16Q2 21 7 18Q12 12 15 12.500Q20 13 20 10Q19 8 14 9" fill="none" stroke="#fff" strokeWidth="1.500" /></svg></TrayIcon>
        <Fit w={33}>ENG</Fit>
        <Clock><Fit w={43}>15:46</Fit><Fit w={88}>20.06.2020</Fit></Clock>
        <Notice>
          <svg width="25" height="26" viewBox="0 0 25 26"><path d="M0 1H24.500V19H13V25L7 19H0Z" fill="#fff" /><path d="M5 6H19M5 10H19M5 14H15" stroke="#212123" strokeWidth="1.300" /></svg>
          <Badge $s={25} $r={-12} $b={-10}>8</Badge>
        </Notice>
        <ShowDesktop />
      </Tray>
    </Taskbar>
  );
}

export default function App() {
  return (
    <Desktop>
      <Global />
      <Browser />
      <Viewport>
        <Page>
          <Stage>
            <Card>
              <SideNav />
              <Report>
                <Sales />
                <Note>
                  <Fit w={1391}>Your UE Marketplace Revenue Statement is available here.If you have any questions on the content of your statement, technical</Fit>
                  <br />
                  <Fit w={824}>questions, or issues accessing the statement, then please send an email to</Fit>{" "}
                  <MailLink><Fit w={459}>marketplace-support@unrealengine.com</Fit></MailLink>
                </Note>
              </Report>
            </Card>
          </Stage>
          <SiteFooter />
        </Page>
        <ScrollTrack>
          <svg width="12" height="7" viewBox="0 0 12 7"><path d="M0 6.500H12L6 .5Z" fill="#505050" /></svg>
          <ScrollThumb />
          <svg width="12" height="7" viewBox="0 0 12 7"><path d="M0 .5H12L6 6.500Z" fill="#505050" /></svg>
        </ScrollTrack>
      </Viewport>
      <Downloads>
        <DownloadItem $w={346} $pad={29}><Icon name="excel" /><FileName><Fit w={187}>SalesReport-day_2....csv</Fit></FileName><Caret /></DownloadItem>
        <DownloadItem $w={341} $pad={25}><Icon name="notepad" /><FileName><Fit w={168}>CityGenerators.artdef</Fit></FileName><Caret /></DownloadItem>
        <ShowAll><Fit w={110}>Показать все</Fit></ShowAll>
        <CloseBar><svg width="14" height="14" viewBox="0 0 14 14"><path d="M1 1 13 13M13 1 1 13" stroke="#6f7275" strokeWidth="2.200" /></svg></CloseBar>
      </Downloads>
      <SystemBar />
    </Desktop>
  );
}
